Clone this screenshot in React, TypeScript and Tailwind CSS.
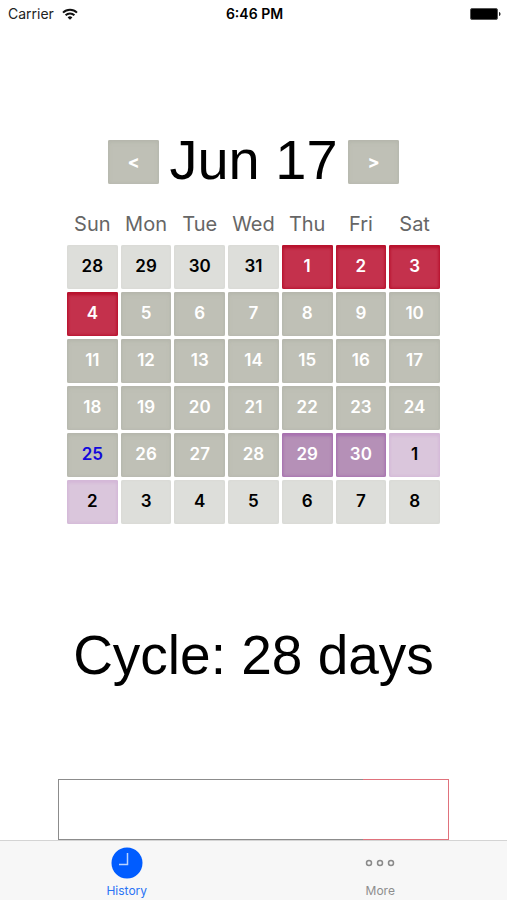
import clsx from "clsx";

const weekdays = ["Sun", "Mon", "Tue", "Wed", "Thu", "Fri", "Sat"];

type Kind = "outside" | "normal" | "today" | "period" | "fertile" | "next";

type Day = { label: number; kind: Kind };

const styles: Record<Kind, string> = {
  outside: "bg-[#dddeda] text-black shadow-[inset_0_0_3px_#d6d7d2]",
  normal: "bg-[#bfc0b6] text-white shadow-[inset_0_2px_4px_#b5b6ac,inset_0_0_3px_#b5b6ac]",
  today: "bg-[#bfc0b6] text-[#1208dc] shadow-[inset_0_2px_4px_#b5b6ac,inset_0_0_3px_#b5b6ac]",
  period: "bg-[#c4314c] text-white shadow-[inset_0_3px_3px_#b8122d,inset_0_0_3px_1px_#b8122d]",
  fertile: "bg-[#b590b7] text-white shadow-[inset_0_3px_3px_#a872b0,inset_0_0_3px_1px_#a872b0]",
  next: "bg-[#dac6dc] text-black shadow-[inset_0_3px_3px_#d4b8d8,inset_0_0_3px_1px_#d4b8d8]",
};

const range = (from: number, to: number, kind: Kind): Day[] =>
  Array.from({ length: to - from + 1 }, (_, i) => ({ label: from + i, kind }));

const days: Day[] = [
  ...range(28, 31, "outside"),
  ...range(1, 4, "period"),
  ...range(5, 24, "normal"),
  ...range(25, 25, "today"),
  ...range(26, 28, "normal"),
  ...range(29, 30, "fertile"),
  ...range(1, 2, "next"),
  ...range(3, 8, "outside"),
];

const weeks = [0, 1, 2, 3, 4, 5].map((w) => days.slice(w * 7, w * 7 + 7));

function StatusBar() {
  return (
    <header className="grid grid-cols-3 items-center h-7 pl-2 pr-1.5 text-sm text-[#222]">
      <div className="flex items-center gap-2">
        <span>Carrier</span>
        <svg className="w-4 h-3" viewBox="0 0 16 12" fill="none" stroke="#111" strokeWidth="2">
          <path d="M1 4.6a10 10 0 0 1 14 0" />
          <path d="M3.6 7.3a6.2 6.2 0 0 1 8.8 0" />
          <path d="M8 11.8 5.6 9.4a3.4 3.4 0 0 1 4.8 0Z" fill="#111" stroke="none" />
        </svg>
      </div>
      <span className="text-center font-semibold text-black">6:46 PM</span>
      <svg className="justify-self-end w-[31px] h-3" viewBox="0 0 31 12">
        <rect x="0.5" y="0.5" width="27" height="11" rx="1.5" fill="#000" stroke="#555" />
        <path d="M29 4c2 .6 2 3.4 0 4Z" fill="#222" />
      </svg>
    </header>
  );
}

function MonthButton({ label, children }: { label: string; children: string }) {
  return (
    <button aria-label={label} className={clsx("w-[51px] h-11 rounded-xs text-lg font-bold", styles.normal)}>
      {children}
    </button>
  );
}

function Calendar() {
  return (
    <table className="w-full table-fixed border-separate border-spacing-[3px] text-center">
      <thead>
        <tr>
          {weekdays.map((day) => (
            <th key={day} className="h-9 p-0 text-xl font-normal text-[#666]">
              {day}
            </th>
          ))}
        </tr>
      </thead>
      <tbody>
        {weeks.map((week, i) => (
          <tr key={i}>
            {week.map((day) => (
              <td key={day.label} className="p-0">
                <button className={clsx("block w-full h-11 rounded-xs text-[17px] font-semibold", styles[day.kind])}>
                  {day.label}
                </button>
              </td>
            ))}
          </tr>
        ))}
      </tbody>
    </table>
  );
}

function TabBar() {
  return (
    <nav className="grid grid-cols-2 h-[60px] border-t border-[#d4d4d4] bg-[#f7f7f7] text-xs">
      <a href="#history" className="flex flex-col items-center gap-1 pt-1.5 text-[#2a73f5]">
        <svg className="w-8 h-8" viewBox="0 0 32 32">
          <circle cx="16" cy="16" r="15.5" fill="#005cff" />
          <path d="M16.5 6v11.5H8" fill="none" stroke="#b9d2ff" strokeWidth="1.5" />
        </svg>
        <span>History</span>
      </a>
      <a href="#more" className="flex flex-col items-center gap-1 pt-1.5 text-[#8e8e8e]">
        <svg className="w-8 h-8" viewBox="0 0 32 32" fill="none" stroke="#8a8a8a" strokeWidth="1.5">
          <circle cx="5" cy="16" r="2.5" />
          <circle cx="16" cy="16" r="2.5" />
          <circle cx="27" cy="16" r="2.5" />
        </svg>
        <span>More</span>
      </a>
    </nav>
  );
}

export default function App() {
  return (
    <div className="flex flex-col min-h-screen bg-white font-['Inter',sans-serif]">
      <StatusBar />
      <main className="flex flex-col flex-1">
        <div className="flex justify-center items-center mt-[110px]">
          <MonthButton label="Previous month">&lt;</MonthButton>
          <h1 className="w-[189px] pb-1 text-center text-[56px] leading-11 text-black font-['Liberation_Sans',sans-serif]">
            Jun 17
          </h1>
          <MonthButton label="Next month">&gt;</MonthButton>
        </div>
        <div className="px-16 pt-[17px]">
          <Calendar />
        </div>
        <p className="mt-24 text-center text-[55px] leading-16 text-black font-['Liberation_Sans',sans-serif]">
          Cycle: 28 days
        </p>
        <div className="flex h-[61px] mt-auto mx-[58px]">
          <div className="w-[78%] border border-r-0 border-[#8c8c8c]"></div>
          <div className="flex-1 border border-l-0 border-[#e0727c]"></div>
        </div>
      </main>
      <TabBar />
    </div>
  );
}
